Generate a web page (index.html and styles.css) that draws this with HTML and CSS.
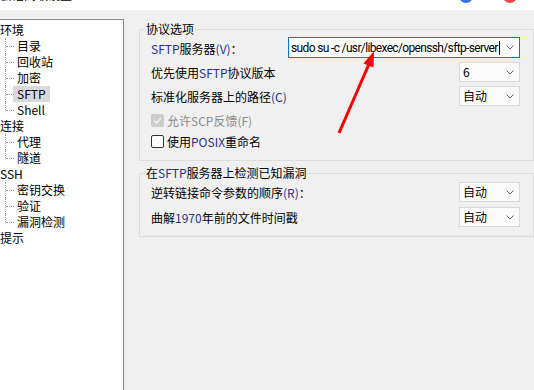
FILE: index.html
```html
<!DOCTYPE html>
<html lang="zh-CN">
  <head>
    <meta charset="UTF-8" />
    <meta name="viewport" content="width=device-width, initial-scale=1.0" />
    <title>会话高级设置</title>
    <link rel="stylesheet" href="styles.css">
  </head>
  <body>
    <div class="titlebar">
      <span class="title">会话高级设置</span>
      <span class="win-dots"><i class="dot blue"></i><i class="dot red"></i></span>
    </div>

    <div class="main">
      <div class="tree">
        <ul class="tree-root">
          <li>
            <span class="item">环境</span>
            <ul class="children">
              <li><span class="item">目录</span></li>
              <li><span class="item">回收站</span></li>
              <li><span class="item">加密</span></li>
              <li><span class="item selected">SFTP</span></li>
              <li><span class="item">Shell</span></li>
            </ul>
          </li>
          <li>
            <span class="item">连接</span>
            <ul class="children">
              <li><span class="item">代理</span></li>
              <li><span class="item">隧道</span></li>
            </ul>
          </li>
          <li>
            <span class="item">SSH</span>
            <ul class="children">
              <li><span class="item">密钥交换</span></li>
              <li><span class="item">验证</span></li>
              <li><span class="item">漏洞检测</span></li>
            </ul>
          </li>
          <li><span class="item">提示</span></li>
        </ul>
      </div>

      <div class="settings">
        <fieldset class="group">
          <legend>协议选项</legend>

          <div class="row">
            <label><span class="en">SFTP</span>服务器<span class="en">(V)</span>：</label>
            <div class="combo edit">
              <span class="value">sudo su -c /usr/libexec/openssh/sftp-server<i class="caret"></i></span>
              <svg class="chev" width="8" height="5" viewBox="0 0 8 5"><polyline points="0.5,0.5 4,4 7.5,0.5" /></svg>
            </div>
          </div>

          <div class="row">
            <label>优先使用<span class="en">SFTP</span>协议版本</label>
            <div class="combo">
              <span class="value">6</span>
              <svg class="chev" width="8" height="5" viewBox="0 0 8 5"><polyline points="0.5,0.5 4,4 7.5,0.5" /></svg>
            </div>
          </div>

          <div class="row">
            <label>标准化服务器上的路径<span class="en">(C)</span></label>
            <div class="combo">
              <span class="value">自动</span>
              <svg class="chev" width="8" height="5" viewBox="0 0 8 5"><polyline points="0.5,0.5 4,4 7.5,0.5" /></svg>
            </div>
          </div>

          <div class="check-row first disabled">
            <span class="box checked">
              <svg width="11" height="11" viewBox="0 0 11 11"><polyline points="2,5.5 4.5,8 9,3" /></svg>
            </span>
            <span>允许SCP反馈(F)</span>
          </div>

          <div class="check-row">
            <span class="box"></span>
            <span>使用<span class="en">POSIX</span>重命名</span>
          </div>
        </fieldset>

        <fieldset class="group second">
          <legend>在<span class="en">SFTP</span>服务器上检测已知漏洞</legend>

          <div class="row first">
            <label>逆转链接命令参数的顺序<span class="en">(R)</span>：</label>
            <div class="combo">
              <span class="value">自动</span>
              <svg class="chev" width="8" height="5" viewBox="0 0 8 5"><polyline points="0.5,0.5 4,4 7.5,0.5" /></svg>
            </div>
          </div>

          <div class="row last">
            <label>曲解<span class="en">1970</span>年前的文件时间戳</label>
            <div class="combo">
              <span class="value">自动</span>
              <svg class="chev" width="8" height="5" viewBox="0 0 8 5"><polyline points="0.5,0.5 4,4 7.5,0.5" /></svg>
            </div>
          </div>
        </fieldset>
      </div>
    </div>

    <!-- red annotation arrow -->
    <svg class="arrow" width="60" height="100" viewBox="330 40 60 100">
      <line x1="339" y1="133" x2="369" y2="64" />
      <polygon points="374,51 373.5,67.5 363.5,63.5" />
    </svg>
  </body>
</html>
```

FILE: styles.css
```css
* {
  box-sizing: border-box;
}

body {
  margin: 0;
  width: 534px;
  height: 390px;
  overflow: hidden;
  position: relative;
  background: #f0f0f0;
  color: #000;
  font-family: "Noto Sans CJK SC", "Noto Sans", sans-serif;
  font-size: 12px;
  line-height: 16px;
}

/* Window title strip (cut off at the top) */
.titlebar {
  height: 10px;
  background: #fff;
  overflow: hidden;
  display: flex;
  justify-content: space-between;
}

.title {
  margin-top: -13px;
  font-size: 12px;
  line-height: 16px;
}

.win-dots {
  display: flex;
  gap: 30px;
  margin-right: 17px;
  margin-top: -11px;
}

.dot {
  display: block;
  width: 14px;
  height: 14px;
  border-radius: 50%;
}

.dot.blue {
  background: #3a6fe6;
}

.dot.red {
  background: #ec4a4a;
}

.main {
  display: flex;
  height: 380px;
}

/* Left navigation tree */
.tree {
  width: 124px;
  margin-top: 9px;
  padding-top: 2px;
  background: #fff;
  border-top: 1px solid #828790;
  border-right: 1px solid #828790;
}

.tree ul {
  list-style: none;
  margin: 0;
  padding: 0;
}

.tree-root > li > .item {
  margin-left: -4px;
}

.item {
  display: inline-block;
  height: 16px;
  line-height: 16px;
  padding: 0 4px;
  white-space: nowrap;
}

.item.selected {
  background: #d9d9d9;
}

.children li {
  position: relative;
  padding-left: 13px;
  height: 16px;
}

.children li::before {
  content: "";
  position: absolute;
  left: 5px;
  top: 0;
  bottom: 0;
  border-left: 1px dotted #a0a0a0;
}

.children li:last-child::before {
  bottom: 8px;
}

.children li::after {
  content: "";
  position: absolute;
  left: 6px;
  top: 8px;
  width: 8px;
  border-top: 1px dotted #a0a0a0;
}

/* Right settings panel */
.settings {
  flex: 1;
  padding: 11px 0 0 15px;
}

.group {
  margin: 0;
  min-width: 0;
  padding: 0 13px 8px 11px;
  border: 1px solid #dcdcdc;
}

.group legend {
  padding: 0 1px;
  margin-left: -6px;
  line-height: 16px;
}

.group.second {
  margin-top: 4px;
  padding-bottom: 9px;
}

.en {
  color: #26318a;
}

.row {
  display: flex;
  align-items: center;
  justify-content: space-between;
  min-height: 20px;
  margin-bottom: 4px;
}

.row label {
  padding-top: 2px;
}

.group.second .row.first {
  margin-top: 1px;
  margin-bottom: 5px;
}

.group.second .row.last {
  margin-bottom: 0;
}

.combo {
  display: flex;
  align-items: center;
  justify-content: space-between;
  width: 61px;
  height: 20px;
  padding: 0 5px 0 3px;
  background: #fbfbfb;
  border: 1px solid #d9d9d9;
}

.combo.edit {
  width: 232px;
  height: 21px;
  padding-left: 2px;
  background: #fff;
  border-color: #0078d7;
}

.combo.edit .value {
  font-family: Roboto, "Noto Sans", sans-serif;
  letter-spacing: -0.65px;
}

.value {
  white-space: nowrap;
  display: flex;
  align-items: center;
}

.caret {
  display: inline-block;
  width: 1px;
  height: 14px;
  margin-left: 1px;
  background: #000;
}

.chev polyline {
  fill: none;
  stroke: #6d6d6d;
  stroke-width: 1;
}

.check-row {
  display: flex;
  align-items: center;
  height: 21px;
}

.check-row.first {
  margin-top: 2px;
}

.box {
  display: flex;
  align-items: center;
  justify-content: center;
  width: 13px;
  height: 13px;
  margin-right: 3px;
  border: 1px solid #333;
  border-radius: 2px;
  background: #fff;
}

.box.checked {
  background: #cccccc;
  border-color: #cccccc;
}

.box polyline {
  fill: none;
  stroke: #f2f2f2;
  stroke-width: 1.4;
}

.check-row.disabled {
  color: #8c8c8c;
}

/* Annotation arrow drawn over the dialog */
.arrow {
  position: absolute;
  left: 330px;
  top: 40px;
}

.arrow line {
  stroke: #ff0000;
  stroke-width: 3;
}

.arrow polygon {
  fill: #ff0000;
}
```
